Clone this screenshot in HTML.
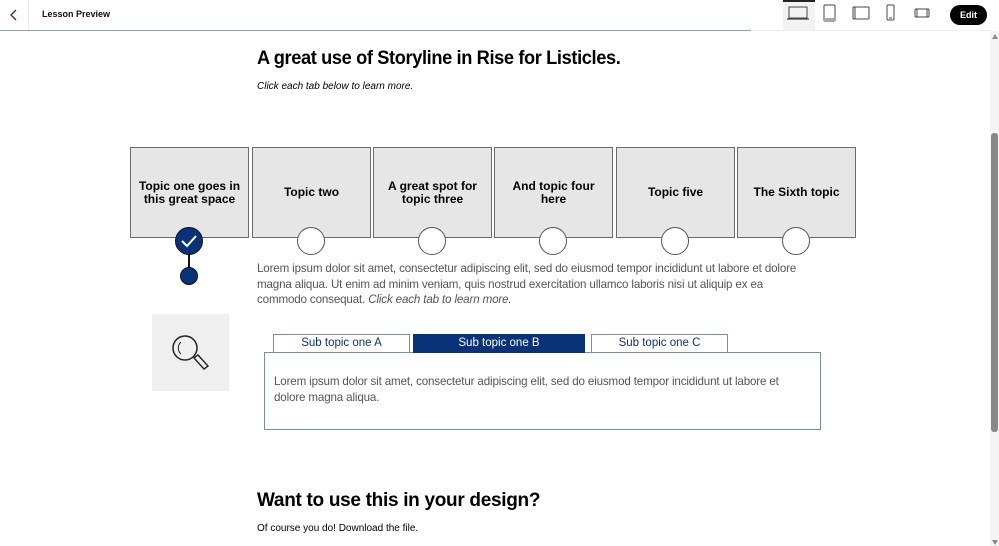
<!DOCTYPE html>
<html><head><style>
*{margin:0;padding:0;box-sizing:border-box}
body{width:999px;height:546px;overflow:hidden;background:#fff;font-family:"Liberation Sans",sans-serif;position:relative;color:#000}
.a{position:absolute}
.box{position:absolute;top:147px;height:91px;background:#e6e6e6;border:1px solid #6b6b6b;display:flex;align-items:center;justify-content:center;text-align:center;font-weight:bold;font-size:12px;line-height:13px;padding:0 4px}
.c{position:absolute;top:227px;width:28px;height:28px;border-radius:50%;background:#fff;border:1px solid #555}
.p{font-size:11.6px;color:#555;line-height:15.5px}
.tab{position:absolute;top:334px;height:19px;border:1px solid #7a8ba8;font-size:11.5px;color:#0a3278;text-align:center;line-height:17px;background:#fff}
</style></head><body>
<div class="a" style="left:0;top:0;width:999px;height:31px;background:#fff"></div>
<div class="a" style="left:0;top:30px;width:751px;height:1px;background:#8fa0bb"></div>
<div class="a" style="left:751px;top:30px;width:240px;height:1px;background:#eee"></div>
<svg class="a" style="left:8px;top:8px" width="12" height="14"><path d="M8 2L3 7L8 12" stroke="#333" stroke-width="1.3" fill="none"/></svg>
<div class="a" style="left:28px;top:0;width:1px;height:30px;background:#eee"></div>
<div class="a" style="left:42px;top:9px;font-size:9px;font-weight:bold;color:#111">Lesson Preview</div>
<div class="a" style="left:783px;top:0;width:32px;height:30px;background:#f2f2f2;border-top:2px solid #222"></div>
<svg class="a" style="left:783px;top:0" width="200" height="30">
<rect x="6" y="7" width="18" height="11" fill="none" stroke="#444"/><path d="M4 19H26" stroke="#444" stroke-width="1.2"/>
<rect x="41" y="5" width="11" height="16" rx="1" fill="none" stroke="#444"/><rect x="41" y="18" width="11" height="3" fill="#aaa"/>
<rect x="70" y="7" width="16" height="12" rx="1" fill="none" stroke="#444"/><path d="M72 7V19" stroke="#444"/>
<rect x="104" y="5" width="7" height="15" rx="1" fill="none" stroke="#444"/><path d="M106 18h3" stroke="#444"/>
<rect x="132" y="9" width="14" height="8" rx="1" fill="none" stroke="#444"/><path d="M134 9v8M144 9v8" stroke="#444"/>
</svg>
<div class="a" style="left:950px;top:5px;width:37px;height:20px;border-radius:10px;background:#000;color:#fff;font-size:9px;font-weight:bold;text-align:center;line-height:20px">Edit</div>
<div class="a" style="left:990px;top:31px;width:9px;height:515px;background:#f4f4f4"></div>
<div class="a" style="left:991px;top:133px;width:7px;height:299px;background:#888;border-radius:3px"></div>
<div class="a" style="left:992px;top:34px;width:0;height:0;border-left:3.5px solid transparent;border-right:3.5px solid transparent;border-bottom:5px solid #888"></div>
<div class="a" style="left:992px;top:540px;width:0;height:0;border-left:3.5px solid transparent;border-right:3.5px solid transparent;border-top:5px solid #888"></div>

<div class="a" style="left:257px;top:48px;font-size:19px;font-weight:bold;letter-spacing:-0.4px;transform:scaleX(0.96);transform-origin:left">A great use of Storyline in Rise for Listicles.</div>
<div class="a" style="left:257px;top:81px;font-size:10px;font-style:italic">Click each tab below to learn more.</div>

<div class="box" style="left:130px;width:119px">Topic one goes in this great space</div>
<div class="box" style="left:252px;width:119px">Topic two</div>
<div class="box" style="left:373px;width:119px">A great spot for topic three</div>
<div class="box" style="left:494px;width:119px">And topic four here</div>
<div class="box" style="left:616px;width:119px">Topic five</div>
<div class="box" style="left:737px;width:119px">The Sixth topic</div>
<div class="a" style="left:188px;top:250px;width:2px;height:20px;background:#111"></div>
<div class="c" style="left:175px;background:#0a3278;border-color:#111"></div>
<svg class="a" style="left:175px;top:227px" width="28" height="28"><path d="M7 14L12 19L21 9" stroke="#fff" stroke-width="2" fill="none"/></svg>
<div class="a" style="left:180px;top:267px;width:18px;height:18px;border-radius:50%;background:#0a3278;border:1.5px solid #111"></div>
<div class="c" style="left:297px"></div>
<div class="c" style="left:418px"></div>
<div class="c" style="left:539px"></div>
<div class="c" style="left:661px"></div>
<div class="c" style="left:782px"></div>

<div class="a p" style="left:257px;top:261px;width:570px;letter-spacing:-0.15px">Lorem ipsum dolor sit amet, consectetur adipiscing elit, sed do eiusmod tempor incididunt ut labore et dolore<br>magna aliqua. Ut enim ad minim veniam, quis nostrud exercitation ullamco laboris nisi ut aliquip ex ea<br>commodo consequat. <i>Click each tab to learn more.</i></div>

<div class="a" style="left:152px;top:314px;width:77px;height:77px;background:#efefef"></div>
<svg class="a" style="left:152px;top:314px" width="77" height="77"><circle cx="33" cy="34" r="12" fill="none" stroke="#222" stroke-width="1.5"/><path d="M29 28a8 8 0 0 0 0 12" stroke="#222" fill="none"/><path d="M42 44l4 -3l10 11l-4 3z" fill="none" stroke="#222" stroke-width="1.4"/></svg>

<div class="a" style="left:264px;top:352px;width:557px;height:78px;border:1px solid #7a8ba8"></div>
<div class="tab" style="left:273px;width:137px">Sub topic one A</div>
<div class="tab" style="left:413px;width:172px;background:#0a3278;color:#fff;border-color:#0a3278">Sub topic one B</div>
<div class="tab" style="left:591px;width:137px">Sub topic one C</div>
<div class="a p" style="left:274px;top:374px;width:540px;letter-spacing:-0.15px">Lorem ipsum dolor sit amet, consectetur adipiscing elit, sed do eiusmod tempor incididunt ut labore et<br>dolore magna aliqua.</div>

<div class="a" style="left:257px;top:490px;font-size:19px;font-weight:bold;letter-spacing:-0.3px">Want to use this in your design?</div>
<div class="a" style="left:257px;top:523px;font-size:10px">Of course you do! Download the file.</div>
</body></html>
